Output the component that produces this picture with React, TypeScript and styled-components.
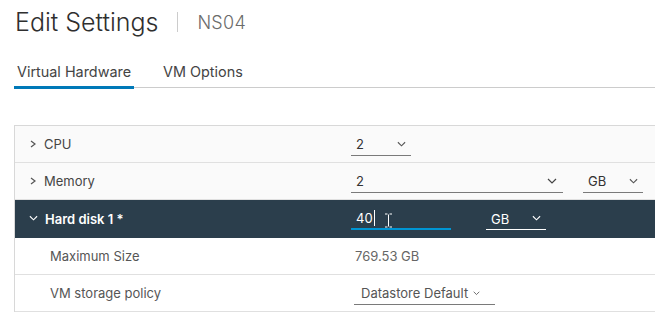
import React from 'react'
import styled, { createGlobalStyle } from 'styled-components'

const GlobalStyle = createGlobalStyle`
  body {
    margin: 0;
    background: #fff;
    font-family: Inter, 'Open Sans', sans-serif;
  }
`

const Page = styled.div`
  width: 655px;
  height: 313px;
  overflow: hidden;
`

const Header = styled.div`
  display: flex;
  align-items: center;
  height: 44px;
  padding-left: 15px;
`

const Title = styled.h1`
  margin: 0;
  font-size: 25px;
  font-weight: 300;
  color: #2f2f2f;
`

const Divider = styled.div`
  width: 1px;
  height: 20px;
  background: #ccc;
  margin: 0 19px 0 19px;
`

const SubTitle = styled.span`
  font-size: 18px;
  font-weight: 300;
  color: #6b6b6b;
  letter-spacing: 0.3px;
`

const Tabs = styled.div`
  display: flex;
  margin-top: 16px;
  margin-left: 14px;
  border-bottom: 1px solid #ccc;
  height: 27px;
`

const Tab = styled.div<{ $active?: boolean }>`
  padding: 0 3px;
  margin-right: 26px;
  font-size: 14.4px;
  color: #444;
  line-height: 24px;
  border-bottom: 3px solid ${p => (p.$active ? '#0079b8' : 'transparent')};
  margin-bottom: -2px;
`

const Grid = styled.div`
  margin: 37px 0 0 14px;
  border-top: 1px solid #d8d8d8;
  border-left: 1px solid #d8d8d8;
`

const Row = styled.div<{ $dark?: boolean; $sub?: boolean }>`
  display: grid;
  grid-template-columns: 336px 1fr;
  align-items: center;
  height: ${p => (p.$dark ? 37 : 36)}px;
  border-bottom: 1px solid ${p => (p.$dark ? '#2b3e4c' : '#e0e0e0')};
  background: ${p => (p.$dark ? '#2b3e4c' : p.$sub ? '#fff' : '#fafafa')};
`

const Label = styled.div<{ $dark?: boolean; $sub?: boolean }>`
  display: flex;
  align-items: center;
  gap: 7px;
  padding-left: ${p => (p.$sub ? 35 : 14)}px;
  font-size: 13px;
  font-weight: ${p => (p.$dark ? 600 : 400)};
  color: ${p => (p.$dark ? '#fff' : p.$sub ? '#565656' : '#454545')};
`

const Cell = styled.div`
  display: flex;
  align-items: center;
  gap: 20px;
`

const Select = styled.div<{ $w: number; $light?: boolean }>`
  display: flex;
  align-items: center;
  justify-content: space-between;
  width: ${p => p.$w}px;
  height: 22px;
  padding: 0 5px;
  box-sizing: border-box;
  border-bottom: 1px solid ${p => (p.$light ? '#fff' : '#7a7a7a')};
  font-size: 13px;
  color: ${p => (p.$light ? '#fff' : '#333')};
  margin-top: 1px;
`

const Input = styled.div`
  position: relative;
  display: flex;
  align-items: center;
  width: 100px;
  height: 22px;
  padding: 0 5px;
  box-sizing: border-box;
  border-bottom: 2px solid #0095d3;
  font-size: 13px;
  color: #fff;
  margin-top: 1px;
  margin-right: 15px;
`

const Caret = styled.span`
  display: inline-block;
  width: 1px;
  height: 16px;
  background: #fff;
  margin-left: 1px;
`

const Beam = styled.svg`
  position: absolute;
  left: 33px;
  top: 5px;
`

const Value = styled.div`
  padding-left: 4px;
  font-size: 13px;
  color: #666;
`

const Policy = styled.span`
  display: flex;
  align-items: center;
  gap: 5px;
  padding-left: 2px;
  color: #555;
`

const Right = () => (
  <svg width="8" height="10" viewBox="0 0 8 10">
    <polyline points="2,2 6,5 2,8" fill="none" stroke="#555" strokeWidth="1.2" />
  </svg>
)

const Down = ({ color = '#555', w = 10 }: { color?: string; w?: number }) => (
  <svg width={w} height="7" viewBox="0 0 10 7">
    <polyline points="1,1 5,5 9,1" fill="none" stroke={color} strokeWidth="1.2" />
  </svg>
)

const App = () => (
  <Page>
    <GlobalStyle />
    <Header>
      <Title>Edit Settings</Title>
      <Divider />
      <SubTitle>NS04</SubTitle>
    </Header>

    <Tabs>
      <Tab $active>Virtual Hardware</Tab>
      <Tab>VM Options</Tab>
    </Tabs>

    <Grid>
      <Row>
        <Label><Right />CPU</Label>
        <Cell>
          <Select $w={60}>2<Down w={9} /></Select>
        </Cell>
      </Row>
      <Row>
        <Label><Right />Memory</Label>
        <Cell>
          <Select $w={212}>2<Down color="#444" w={12} /></Select>
          <Select $w={60}>GB<Down w={9} /></Select>
        </Cell>
      </Row>
      <Row $dark>
        <Label $dark><Down color="#fff" w={9} />Hard disk 1 *</Label>
        <Cell>
          <Input>
            40<Caret />
            <Beam width="9" height="15" viewBox="0 0 9 15">
              <path d="M1 1h2.5M5.5 1H8M4.5 1.5v12M1 14h2.5M5.5 14H8" stroke="#fff" strokeWidth="1" fill="none" />
            </Beam>
          </Input>
          <Select $w={60} $light>GB<Down color="#fff" w={9} /></Select>
        </Cell>
      </Row>
      <Row $sub>
        <Label $sub>Maximum Size</Label>
        <Cell><Value>769.53 GB</Value></Cell>
      </Row>
      <Row $sub>
        <Label $sub>VM storage policy</Label>
        <Cell>
          <Select $w={141} style={{ marginLeft: 3 }}>
            <Policy>Datastore Default <Down w={7} /></Policy>
          </Select>
        </Cell>
      </Row>
    </Grid>
  </Page>
)

export default App
